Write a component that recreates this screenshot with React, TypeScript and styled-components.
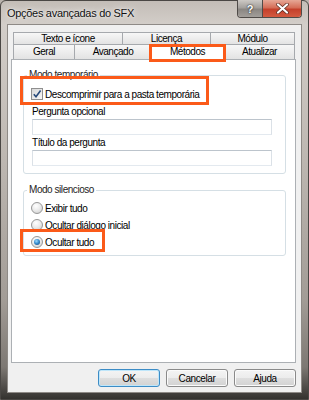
import styled, { createGlobalStyle, css } from 'styled-components'

const GlobalStyle = createGlobalStyle`
    html, body {
        margin: 0;
        padding: 0;
        background: #b9b3ad;
    }
    body {
        font-family: "Liberation Sans", Arial, sans-serif;
    }
    * {
        box-sizing: border-box;
    }
`

// orange annotation frame painted over an element
const mark = (t: number, r: number, b: number, l: number) => css`
    position: relative;
    z-index: 2;

    &::after {
        content: '';
        position: absolute;
        top: -${t}px;
        right: -${r}px;
        bottom: -${b}px;
        left: -${l}px;
        border: 3px solid #fb5a19;
        pointer-events: none;
    }
`

const Window = styled.div`
    width: 309px;
    height: 400px;
    display: flex;
    flex-direction: column;
    padding: 0 6px 6px;
    border: 1px solid #4a4744;
    border-radius: 6px 6px 0 0;
    background: linear-gradient(
        to bottom,
        #c3bdb7 0%,
        #d3cec9 6%,
        #bdb7b1 40%,
        #a29c96 75%,
        #7d7873 92%,
        #34322f 100%
    );
`

const TitleBar = styled.div`
    height: 23px;
    display: flex;
    align-items: flex-start;
`

const Title = styled.span`
    margin-top: 5px;
    font-size: 11px;
    line-height: 14px;
    letter-spacing: -0.3px;
    color: #111;
    text-shadow: 0 0 6px rgba(255, 255, 255, 0.95), 0 0 2px rgba(255, 255, 255, 0.8);
`

const Caption = styled.div`
    margin-left: auto;
    margin-top: -1px;
    display: flex;
    height: 18px;
    border: 1px solid #4f4b48;
    border-top: none;
    border-radius: 0 0 4px 4px;
    overflow: hidden;
`

const CaptionButton = styled.div<{ $close?: boolean }>`
    width: ${(p) => (p.$close ? 39 : 24)}px;
    display: flex;
    align-items: center;
    justify-content: center;
    font-size: 11px;
    font-weight: bold;
    color: #fff;
    text-shadow: 0 0 2px #333, 0 0 1px #222;
    background: ${(p) =>
        p.$close
            ? 'linear-gradient(to bottom, #e6a796 0%, #d56e58 45%, #c4402b 55%, #d45a40 100%)'
            : 'linear-gradient(to bottom, #cdc9c5 0%, #a4a09c 45%, #8a8682 55%, #a29e9a 100%)'};
    border-left: ${(p) => (p.$close ? '1px solid #4f4b48' : 'none')};
`

const Client = styled.div`
    flex: 1;
    display: flex;
    flex-direction: column;
    padding: 7px 5px 5px 3px;
    background: #f0f0f0;
    border: 1px solid #8e8a86;
`

const Tabs = styled.div`
    margin: 0 1px 0 2px;
    display: flex;
    flex-direction: column;
`

const TabRow = styled.div`
    display: flex;
`

const Tab = styled.div<{ $w: number; $h: number; $selected?: boolean }>`
    width: ${(p) => p.$w}px;
    height: ${(p) => p.$h}px;
    flex: none;
    border: 1px solid #a6a9ad;
    border-bottom: none;
    border-right: none;
    font-size: 10px;
    letter-spacing: -0.45px;
    line-height: ${(p) => p.$h - 1}px;
    text-align: center;
    color: #000;
    background: linear-gradient(to bottom, #f7f7f7, #e3e3e3);

    &:last-child {
        border-right: 1px solid #a6a9ad;
    }

    ${(p) =>
        p.$selected &&
        css`
            height: ${p.$h + 1}px;
            margin-bottom: -1px;
            line-height: ${p.$h - 2}px;
            background: #fff;
            border-right: 1px solid #a6a9ad;
            ${mark(1, 3, 2, 3)}
        `}
`

const Panel = styled.div`
    flex: 1;
    background: #fff;
    border: 1px solid #acb0b4;
    padding: 9px 9px 0 11px;
`

const Group = styled.fieldset<{ $pt: number; $pb: number; $mt?: number }>`
    margin: ${(p) => p.$mt ?? 0}px 0 0;
    min-width: 0;
    padding: ${(p) => p.$pt}px 12px ${(p) => p.$pb}px 7px;
    border: 1px solid #d5dfe5;
    border-radius: 3px;
`

const Legend = styled.legend`
    margin-left: -4px;
    padding: 0 2px;
    font-size: 10px;
    line-height: 12px;
    letter-spacing: -0.45px;
    color: #1e1e1e;
`

const Option = styled.label<{ $gap?: number }>`
    width: fit-content;
    height: 12px;
    display: flex;
    align-items: center;
    gap: 2px;
    margin-top: ${(p) => p.$gap ?? 0}px;
    font-size: 10px;
    letter-spacing: -0.45px;
    color: #000;
`

const CheckOption = styled(Option)`
    ${mark(12, 10, 5, 11)}
`

const RadioOption = styled(Option)<{ $marked?: boolean }>`
    ${(p) => p.$marked && mark(7, 11, 4, 11)}
`

const Box = styled.span`
    width: 12px;
    height: 12px;
    flex: none;
    display: flex;
    align-items: center;
    justify-content: center;
    border: 1px solid #8f8f8f;
    background: linear-gradient(135deg, #d8d8d8, #f8f8f8);
`

const Radio = styled.span`
    width: 12px;
    height: 12px;
    flex: none;
    display: flex;
    align-items: center;
    justify-content: center;
    border: 1px solid #979797;
    border-radius: 50%;
    background: radial-gradient(circle at 40% 30%, #ffffff 0%, #ececec 45%, #c9c9c9 100%);
`

const RadioDot = styled.span`
    width: 6px;
    height: 6px;
    border-radius: 50%;
    background: radial-gradient(circle at 40% 35%, #9fdcff 0%, #3a8fd0 45%, #0f3f72 100%);
`

const FieldLabel = styled.div<{ $mt: number }>`
    margin: ${(p) => p.$mt}px 0 0 1px;
    font-size: 10px;
    line-height: 12px;
    letter-spacing: -0.45px;
    color: #000;
`

const TextBox = styled.div`
    width: 240px;
    height: 16px;
    margin: 1px 0 0 1px;
    background: #fff;
    border: 1px solid;
    border-color: #bcc4cc #dbe1e7 #e3e9ef #dbe1e7;
`

const ButtonRow = styled.div`
    display: flex;
    justify-content: flex-end;
    gap: 6px;
    margin-top: 6px;
`

const Button = styled.div<{ $primary?: boolean }>`
    width: 62px;
    height: 18px;
    display: flex;
    align-items: center;
    justify-content: center;
    font-size: 10px;
    letter-spacing: -0.4px;
    color: #000;
    border: 1px solid ${(p) => (p.$primary ? '#3c8cc6' : '#8a8a8a')};
    border-radius: 3px;
    box-shadow: inset 0 0 0 1px ${(p) => (p.$primary ? '#bfe6fa' : '#fbfbfb')};
    background: linear-gradient(to bottom, #f4f4f4 0%, #ececec 50%, #dedede 50%, #d2d2d2 100%);
`

function CheckMark() {
    return (
        <svg width="10" height="10" viewBox="0 0 10 10">
            <path d="M1.8 5.2 L4 7.8 L8.6 1.6" fill="none" stroke="#27497a" strokeWidth="1.6" />
        </svg>
    )
}

function CloseGlyph() {
    return (
        <svg width="13" height="11" viewBox="0 0 13 11">
            <path d="M2 1.5 L11 9.5 M11 1.5 L2 9.5" stroke="#5a2a20" strokeWidth="3.6" strokeLinecap="round" />
            <path d="M2 1.5 L11 9.5 M11 1.5 L2 9.5" stroke="#fff" strokeWidth="2.2" strokeLinecap="round" />
        </svg>
    )
}

const topTabs = [
    { label: 'Texto e ícone', w: 109 },
    { label: 'Licença', w: 88 },
    { label: 'Módulo', w: 85 },
]

const bottomTabs = [
    { label: 'Geral', w: 61 },
    { label: 'Avançado', w: 77 },
    { label: 'Métodos', w: 73, selected: true },
    { label: 'Atualizar', w: 71 },
]

const silentModes = [
    { label: 'Exibir tudo', checked: false },
    { label: 'Ocultar diálogo inicial', checked: false },
    { label: 'Ocultar tudo', checked: true },
]

export default function App() {
    return (
        <>
            <GlobalStyle />
            <Window>
                <TitleBar>
                    <Title>Opções avançadas do SFX</Title>
                    <Caption>
                        <CaptionButton>?</CaptionButton>
                        <CaptionButton $close>
                            <CloseGlyph />
                        </CaptionButton>
                    </Caption>
                </TitleBar>
                <Client>
                    <Tabs>
                        <TabRow>
                            {topTabs.map((t) => (
                                <Tab key={t.label} $w={t.w} $h={12}>
                                    {t.label}
                                </Tab>
                            ))}
                        </TabRow>
                        <TabRow>
                            {bottomTabs.map((t) => (
                                <Tab key={t.label} $w={t.w} $h={15} $selected={t.selected}>
                                    {t.label}
                                </Tab>
                            ))}
                        </TabRow>
                    </Tabs>
                    <Panel>
                        <Group $pt={7} $pb={7}>
                            <Legend>Modo temporário</Legend>
                            <CheckOption>
                                <Box>
                                    <CheckMark />
                                </Box>
                                Descomprimir para a pasta temporária
                            </CheckOption>
                            <FieldLabel $mt={6}>Pergunta opcional</FieldLabel>
                            <TextBox />
                            <FieldLabel $mt={2}>Título da pergunta</FieldLabel>
                            <TextBox />
                        </Group>
                        <Group $pt={6} $pb={7} $mt={10}>
                            <Legend>Modo silencioso</Legend>
                            {silentModes.map((m, i) => (
                                <RadioOption key={m.label} $gap={i ? 5 : 0} $marked={m.checked}>
                                    <Radio>{m.checked && <RadioDot />}</Radio>
                                    {m.label}
                                </RadioOption>
                            ))}
                        </Group>
                    </Panel>
                    <ButtonRow>
                        <Button $primary>OK</Button>
                        <Button>Cancelar</Button>
                        <Button>Ajuda</Button>
                    </ButtonRow>
                </Client>
            </Window>
        </>
    )
}
